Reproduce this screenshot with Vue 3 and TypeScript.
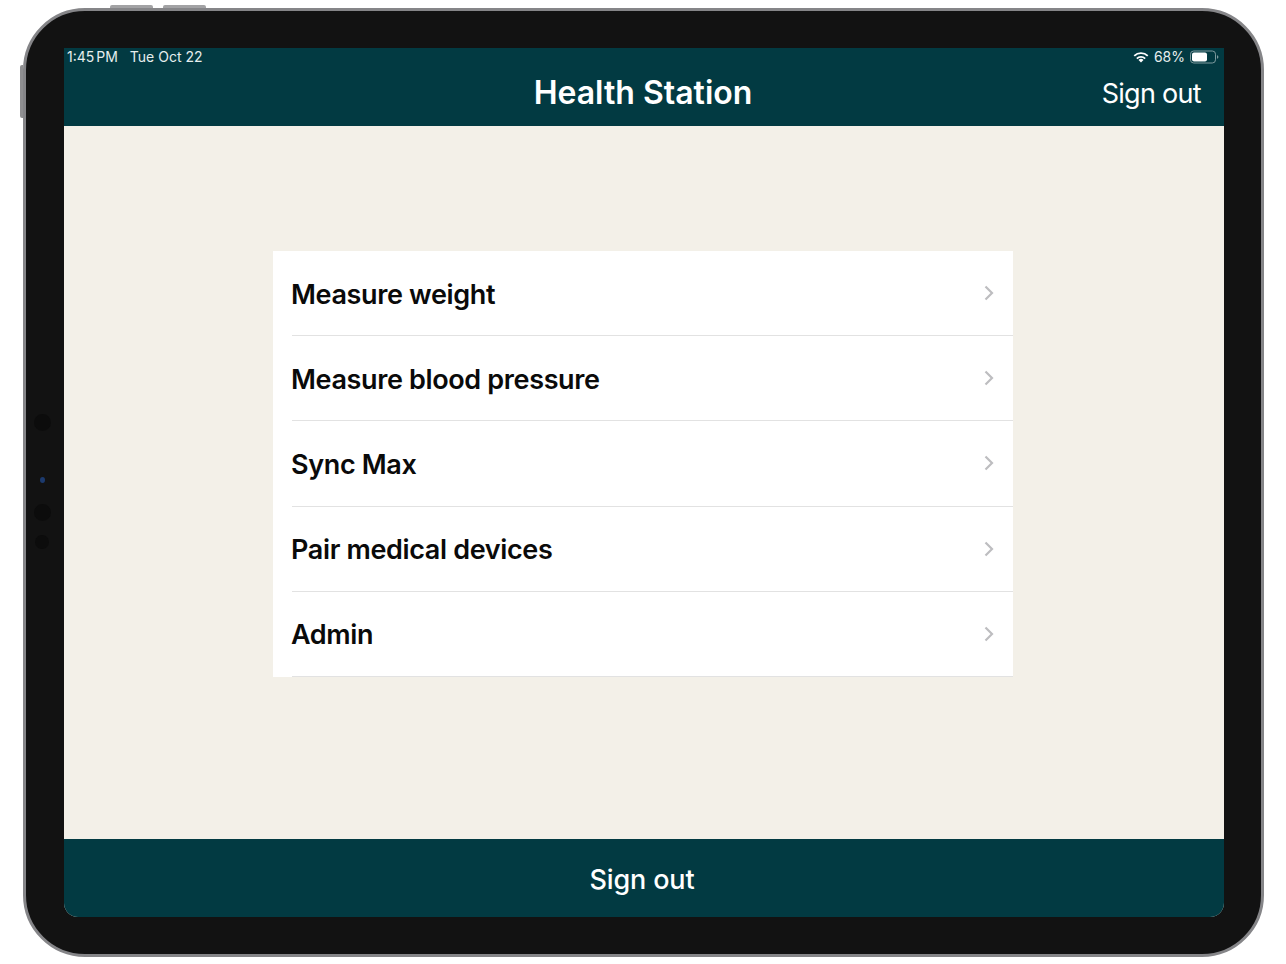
<script setup lang="ts">
const items: string[] = ['Measure weight', 'Measure blood pressure', 'Sync Max', 'Pair medical devices', 'Admin']
</script>

<template>
  <div class="page">
    <div class="device">
      <span class="hw top-a"></span>
      <span class="hw top-b"></span>
      <span class="hw side"></span>
      <span class="cam cam-1"></span>
      <span class="cam cam-2"></span>
      <span class="cam cam-3"></span>
      <span class="cam cam-4"></span>
      <div class="screen">
        <header class="header">
          <div class="status">
            <div class="status-left"><span class="time">1:45 PM</span><span>Tue Oct 22</span></div>
            <div class="status-right">
              <svg class="wifi" width="16" height="12" viewBox="0 0 16 12" aria-hidden="true">
                <path d="M8 11.600 5.500 9.100a3.500 3.500 0 0 1 5 0L8 11.600Z" fill="#fff" />
                <path d="M3.200 6.900a6.800 6.800 0 0 1 9.600 0l-1.300 1.300a5 5 0 0 0-7 0L3.200 6.900Z" fill="#fff" />
                <path d="M.6 4.300a10.500 10.500 0 0 1 14.800 0l-1.300 1.300a8.700 8.700 0 0 0-12.200 0L.6 4.300Z" fill="#fff" />
              </svg>
              <span>68%</span>
              <svg width="29" height="14" viewBox="0 0 29 14" aria-hidden="true">
                <rect x="0.5" y="1" width="25" height="12" rx="3.200" fill="none" stroke="#7f9a9e" stroke-width="1" />
                <rect x="2" y="2.500" width="15" height="9" rx="2" fill="#fff" />
                <path d="M27 5.200c.9.3 1.400 1 1.400 1.800s-.5 1.500-1.400 1.800V5.200Z" fill="#7f9a9e" />
              </svg>
            </div>
          </div>
          <div class="nav">
            <h1 class="title">Health Station</h1>
            <a class="nav-action">Sign out</a>
          </div>
        </header>
        <main class="content">
          <ul class="list">
            <li v-for="item in items" :key="item" class="row">
              <span class="label">{{ item }}</span>
              <svg class="chev" width="10" height="16" viewBox="0 0 10 16" aria-hidden="true">
                <path d="M1.500 1.500 8 8l-6.500 6.500" fill="none" stroke="#bdbdc0" stroke-width="2.200" />
              </svg>
            </li>
          </ul>
        </main>
        <footer class="footer">Sign out</footer>
      </div>
    </div>
  </div>
</template>

<style>
html, body { margin: 0; background: #fff; }
</style>

<style scoped>
.page {
  width: 1286px;
  height: 964px;
  padding: 8px 22px 7px 23px;
  box-sizing: border-box;
  background: #fff;
  font-family: Inter, "Liberation Sans", sans-serif;
}
.device {
  position: relative;
  height: 949px;
  box-sizing: border-box;
  padding: 37px 37px 37px 38px;
  border: 3px solid #858588;
  border-radius: 62px;
  background: #121212;
}
.hw { position: absolute; background: #a2a2a4; }
.top-a { left: 84px; top: -6px; width: 43px; height: 3px; border-radius: 2px 2px 0 0; }
.top-b { left: 137px; top: -6px; width: 43px; height: 3px; border-radius: 2px 2px 0 0; }
.side { left: -6px; top: 54px; width: 3px; height: 53px; background: #8f8f91; border-radius: 2px 0 0 2px; }
.cam { position: absolute; border-radius: 50%; background: #0c0c0c; }
.cam-1 { left: 8px; top: 403px; width: 17px; height: 17px; }
.cam-2 { left: 14px; top: 466px; width: 5px; height: 6px; background: #1c3a6e; }
.cam-3 { left: 8px; top: 493px; width: 17px; height: 17px; }
.cam-4 { left: 9px; top: 524px; width: 14px; height: 14px; }
.screen {
  display: flex;
  flex-direction: column;
  height: 869px;
  border-radius: 0 0 14px 14px;
  overflow: hidden;
  background: #f3f0e8;
}
.header {
  height: 78px;
  flex: none;
  background: #023a42;
  color: #fff;
}
.status {
  display: flex;
  justify-content: space-between;
  align-items: center;
  height: 20px;
  padding: 0 5px 3px 3px;
  box-sizing: border-box;
  font-size: 14px;
  color: #e6eeee;
}
.status-left { display: flex; gap: 12px; }
.time { word-spacing: -2px; }
.status-right { display: flex; align-items: center; gap: 5px; }
.nav {
  position: relative;
  display: flex;
  justify-content: center;
  align-items: center;
  height: 50px;
  padding-right: 2px;
  box-sizing: border-box;
}
.title {
  margin: 0;
  font-size: 32px;
  font-weight: 600;
  line-height: 50px;
}
.nav-action {
  position: absolute;
  right: 23px;
  top: 1px;
  font-size: 27px;
  font-weight: 400;
  letter-spacing: -0.7px;
  line-height: 50px;
}
.content {
  flex: 1;
  display: flex;
  justify-content: center;
  padding-top: 125px;
  padding-right: 3px;
}
.list {
  width: 740px;
  height: 426px;
  margin: 0;
  padding: 0;
  list-style: none;
  background: #fff;
}
.row {
  display: flex;
  align-items: center;
  justify-content: space-between;
  height: 85.2px;
  margin-left: 19px;
  padding-right: 19px;
  box-sizing: border-box;
  border-bottom: 1px solid #e2e2e2;
}
.label {
  position: relative;
  top: 1px;
  left: -0.5px;
  font-size: 27px;
  font-weight: 600;
  letter-spacing: -0.36px;
  color: #0a0a0a;
}
.footer {
  flex: none;
  height: 78px;
  padding: 2px 4px 0 0;
  box-sizing: border-box;
  background: #023a42;
  color: #fff;
  display: flex;
  align-items: center;
  justify-content: center;
  font-size: 27px;
  font-weight: 500;
  letter-spacing: -0.15px;
}
</style>
